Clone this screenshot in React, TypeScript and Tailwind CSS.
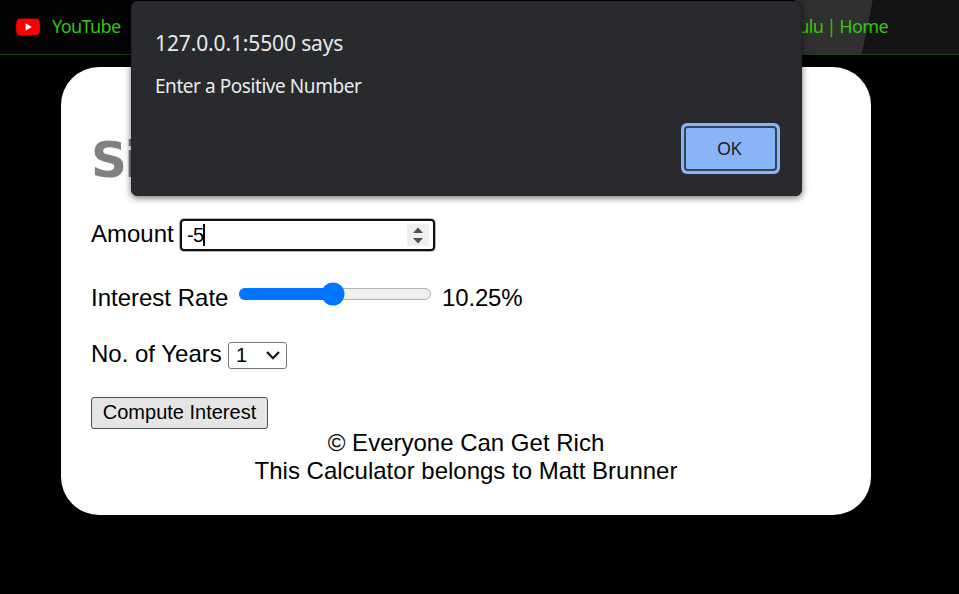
function BookmarksBar() {
  return (
    <header className="relative h-[55px] overflow-hidden border-b border-[#223c20] bg-[#020302] font-['Noto_Sans',sans-serif] text-[#39c30e]">
      <svg className="absolute top-0 right-0 h-[54px] w-[239px]" viewBox="0 0 239 54">
        <path d="M75 0H153Q149 22 142 54H75Z" fill="#303030" />
        <path d="M153 0H239V54H142Q149 22 153 0Z" fill="#141414" />
      </svg>
      <div className="relative flex h-[52px] items-center pl-4">
        <svg className="mt-[2px] h-[18px] w-6" viewBox="0 0 24 18">
          <path
            d="M4 .8Q12 0 20 .8Q23.3 1 23.6 4Q24.3 9 23.6 14Q23.3 16.9 20 17.1Q12 17.8 4 17.1Q.7 16.9 .4 14Q-.3 9 .4 4Q.7 1 4 .8Z"
            fill="#f00"
          />
          <path d="M9.6 5.2L15.8 9L9.6 12.6Z" fill="#fff" />
        </svg>
        <span className="ml-3 w-[69px] text-[18px] leading-6 tracking-[-0.6px] whitespace-nowrap">YouTube</span>
        <span className="ml-auto pr-[71px] text-[18px] leading-6 tracking-[-0.6px] [word-spacing:-0.8px] whitespace-nowrap">Hulu | Home</span>
      </div>
    </header>
  );
}

function AlertDialog() {
  return (
    <div className="absolute top-px left-[131px] flex h-[195px] w-[671px] flex-col rounded-[6px] border border-[#222326] bg-[#292a2d] px-[23px] pt-[26px] font-['Noto_Sans',sans-serif] text-[#e8eaed] shadow-[0_2px_7px_rgba(0,0,0,0.55)]">
      <h2 className="h-8 text-[21px] leading-[30px] tracking-[-0.13px] whitespace-nowrap">127.0.0.1:5500 says</h2>
      <p className="mt-[12px] h-7 text-[19px] leading-7 tracking-[-0.44px] whitespace-nowrap">Enter a Positive Number</p>
      <button className="mt-[23px] -mr-[2px] flex h-[51px] w-[99px] self-end rounded-[6px] bg-[#8ab4f8] p-[3px] text-[18px] text-[#202124]">
        <span className="flex h-full w-full items-center justify-center rounded-[4px] border-2 border-[#35445d] pr-[3px] pb-px tracking-[-0.5px]">OK</span>
      </button>
    </div>
  );
}

function NumberField() {
  return (
    <div className="ml-[5px] flex h-[34px] w-[257px] items-center rounded-[5px] border border-[#b8b8b8] bg-white">
      <div className="flex h-[32px] w-[255px] items-center rounded-[4px] border-2 border-[#101010] pr-1 pl-[5px]">
        <span className="text-[20px] leading-6 tracking-[-0.7px]">-5</span>
        <span className="h-[22px] w-[1.5px] bg-black" />
        <svg className="ml-auto h-[22px] w-[22px] bg-[#efefef]" viewBox="0 0 22 22">
          <path d="M6 9L11 3.5L16 9Z M6 14L11 19.5L16 14Z" fill="#505050" />
        </svg>
      </div>
    </div>
  );
}

function RateSlider() {
  return (
    <svg className="mt-[3px] ml-[10px] h-6 w-[194px]" viewBox="0 0 194 24">
      <rect x="1.5" y="6.5" width="191" height="11" rx="5.5" fill="#efefef" stroke="#b2b2b2" />
      <path d="M7 6H95V18H7A6 6 0 0 1 7 6Z" fill="#0075ff" />
      <circle cx="95" cy="12" r="11.5" fill="#0075ff" />
    </svg>
  );
}

export default function App() {
  return (
    <div className="relative h-[594px] w-[959px] overflow-hidden bg-black font-['Liberation_Sans',Arial,sans-serif] text-black">
      <BookmarksBar />
      <main className="mt-3 ml-[61px] h-[448px] w-[810px] rounded-[38px] bg-white pt-[65px] pr-[30px] pl-[30px] text-[24px] leading-7">
        <h1 className="h-[57px] font-['DejaVu_Sans',Verdana,sans-serif] text-[50px] leading-[57px] font-bold tracking-[-2.5px] text-[#808080]">Si</h1>
        <div className="mt-[29px] flex h-[34px] items-start">
          <label className="mt-[2px] w-[83px] whitespace-nowrap">Amount</label>
          <NumberField />
        </div>
        <div className="mt-[27px] flex h-[36px] items-start">
          <label className="mt-[5px] w-[137px] whitespace-nowrap">Interest Rate</label>
          <RateSlider />
          <span className="mt-[5px] ml-[10px] tracking-[-0.15px]">10.25%</span>
        </div>
        <div className="mt-[25px] flex h-[30px] items-start">
          <label className="w-[131px] whitespace-nowrap">No. of Years</label>
          <div className="ml-[6px] mt-[2px] flex h-[27px] w-[59px] items-center rounded-[3px] border border-[#767676] pr-[6px] pb-px pl-[7px] text-[20px] leading-6">
            <span>1</span>
            <svg className="ml-auto h-[9px] w-[14px]" viewBox="0 0 14 9" fill="none">
              <path d="M1 1L7 7.2L13 1" stroke="#111" strokeWidth="2.2" />
            </svg>
          </div>
        </div>
        <button className="mt-[27px] flex h-8 w-[177px] items-center justify-center rounded-[3px] border border-[#505050] bg-[#e5e5e5] pb-[2px] text-[20px] leading-6 whitespace-nowrap">
          Compute Interest
        </button>
        <footer className="text-center">
          <p>© Everyone Can Get Rich</p>
          <p>This Calculator belongs to Matt Brunner</p>
        </footer>
      </main>
      <AlertDialog />
    </div>
  );
}
